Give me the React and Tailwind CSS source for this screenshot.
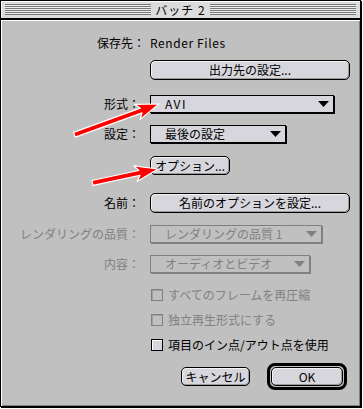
import React from "react";

const font = "font-['Noto_Sans_CJK_JP','Noto_Sans_CJK_SC',sans-serif]";

function Triangle({ gray }) {
  return (
    <svg width="11" height="6" viewBox="0 0 11 6">
      <polygon points="0,0 11,0 5.5,6" fill={gray ? "#808080" : "#000"} />
    </svg>
  );
}

function Popup({ width, text, disabled, wide }) {
  return (
    <div
      className={
        disabled
          ? "h-[18px] flex items-center justify-between pl-[14px] pr-[4px] border border-[#808080] shadow-[1px_1px_0_#808080] bg-[#c0c0c0] text-[#808080]"
          : "h-[18px] flex items-center justify-between pl-[14px] pr-[4px] border border-black shadow-[1px_1px_0_#000] bg-[#d6d6dc] text-black"
      }
      style={{ width }}
    >
      <span className={wide ? "tracking-[1.5px]" : ""}>{text}</span>
      <Triangle gray={disabled} />
    </div>
  );
}

function Button({ width, height = 20, children }) {
  return (
    <div
      className="flex items-center justify-center rounded-[5px] border border-black bg-[#d6d6dc] shadow-[inset_1px_1px_0_#f4f4f4,inset_-1px_-1px_0_#9a9a9a]"
      style={{ width, height }}
    >
      {children}
    </div>
  );
}

function Check({ label, disabled }) {
  return (
    <div className="flex items-center h-[14px] pl-[150px] gap-[5px]">
      <div
        className={
          disabled
            ? "w-3 h-3 border border-[#808080] bg-[#c0c0c0] shadow-[inset_1px_1px_0_#a0a0a0]"
            : "w-3 h-3 border border-black bg-[#d6d6dc] shadow-[inset_1px_1px_0_#fff]"
        }
      />
      <span className={disabled ? "text-[#808080]" : "text-black"}>{label}</span>
    </div>
  );
}

function Arrow({ x, y, angle, length }) {
  return (
    <g transform={`translate(${x} ${y}) rotate(${angle})`}>
      <polygon
        points={`${-length},-2.5 -19,-2.5 -23,-8 0,0 -23,8 -19,2.5 ${-length},2.5`}
        fill="#ff0000"
        stroke="#fff"
        strokeWidth="1.2"
        strokeLinejoin="round"
      />
    </g>
  );
}

export default function App() {
  return (
    <div className={`relative w-[363px] h-[409px] bg-white text-[12px] leading-none text-black ${font}`}>
      <div className="w-[361px] h-[407px] border border-black shadow-[1px_1px_0_#000] bg-[#c0c0c0] flex flex-col">
        {/* title bar */}
        <div className="h-[19px] border-b-2 border-black bg-[#dcdcdc] flex items-center px-[4px] shadow-[inset_1px_1px_0_#fff]">
          <div className="flex-1 h-[11px] bg-[image:repeating-linear-gradient(to_bottom,#777_0px,#777_1px,#eee_1px,#eee_2px)]" />
          <div className="px-[4px] tracking-[1px]">バッチ 2</div>
          <div className="flex-1 h-[11px] bg-[image:repeating-linear-gradient(to_bottom,#777_0px,#777_1px,#eee_1px,#eee_2px)]" />
        </div>

        {/* body */}
        <div className="flex-1 flex flex-col shadow-[inset_1px_1px_0_#fff,inset_-1px_-1px_0_#808080]">
          <div className="mt-[13px] h-[20px] flex items-center pl-[96px]">
            <span>保存先：</span>
            <span className="ml-[5px] tracking-[0.6px]">Render Files</span>
          </div>

          <div className="mt-[7px] pl-[149px]">
            <Button width={200}>出力先の設定...</Button>
          </div>

          <div className="mt-[15px] flex items-center">
            <div className="w-[139px] text-right">形式：</div>
            <div className="ml-[10px]">
              <Popup width={184} text="AVI" wide />
            </div>
          </div>

          <div className="mt-[12px] flex items-center">
            <div className="w-[139px] text-right">設定：</div>
            <div className="ml-[10px]">
              <Popup width={136} text="最後の設定" />
            </div>
          </div>

          <div className="mt-[13px] pl-[149px]">
            <Button width={80} height={19}>オプション...</Button>
          </div>

          <div className="mt-[18px] flex items-center">
            <div className="w-[139px] text-right">名前：</div>
            <div className="ml-[10px]">
              <Button width={200}>名前のオプションを設定...</Button>
            </div>
          </div>

          <div className="mt-[12px] flex items-center">
            <div className="w-[139px] text-right text-[#808080]">レンダリングの品質：</div>
            <div className="ml-[10px]">
              <Popup width={172} text="レンダリングの品質 1" disabled />
            </div>
          </div>

          <div className="mt-[12px] flex items-center">
            <div className="w-[139px] text-right text-[#808080]">内容：</div>
            <div className="ml-[10px]">
              <Popup width={160} text="オーディオとビデオ" disabled />
            </div>
          </div>

          <div className="mt-[15px]">
            <Check label="すべてのフレームを再圧縮" disabled />
          </div>
          <div className="mt-[11px]">
            <Check label="独立再生形式にする" disabled />
          </div>
          <div className="mt-[11px]">
            <Check label="項目のイン点/アウト点を使用" />
          </div>

          <div className="mt-[11px] flex items-center pl-[180px] gap-[17px]">
            <Button width={69} height={19}>キャンセル</Button>
            <div className="w-[80px] h-[27px] rounded-[8px] border-[3px] border-black p-[1px]">
              <div className="w-full h-full flex items-center justify-center rounded-[5px] border border-black bg-[#d6d6dc] shadow-[inset_1px_1px_0_#f4f4f4,inset_-1px_-1px_0_#9a9a9a]">
                OK
              </div>
            </div>
          </div>
        </div>
      </div>

      <svg className="absolute left-0 top-0 pointer-events-none" width="363" height="409">
        <Arrow x={159} y={104} angle={-20} length={90} />
        <Arrow x={158} y={169} angle={-12} length={67} />
      </svg>
    </div>
  );
}
